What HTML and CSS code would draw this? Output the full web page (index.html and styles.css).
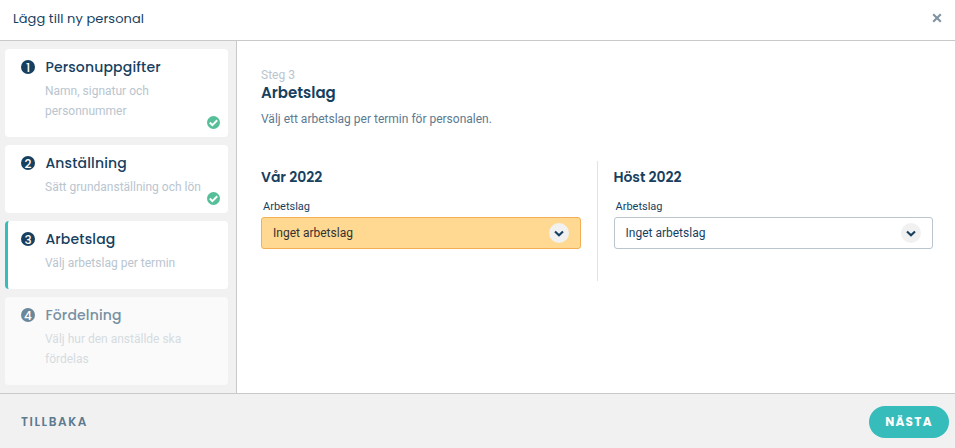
FILE: index.html
```html
<!DOCTYPE html>
<html lang="sv">
<head>
<meta charset="utf-8">
<title>Lägg till ny personal</title>
<link rel="stylesheet" href="styles.css">
</head>
<body>
<div class="dialog">
  <header class="header">
    <h1 class="header-title">Lägg till ny personal</h1>
    <button class="close" aria-label="Stäng"><svg width="10" height="10" viewBox="0 0 10 10"><path d="M1.2 1.2l7.6 7.6M8.8 1.2l-7.6 7.6"/></svg></button>
  </header>
  <div class="body">
    <nav class="steps">
      <div class="step tall">
        <span class="num">1</span>
        <div><h2 class="step-title">Personuppgifter</h2><p class="step-text">Namn, signatur och<br>personnummer</p></div>
        <svg class="check" width="13" height="13" viewBox="0 0 13 13"><circle cx="6.5" cy="6.5" r="6.5"/><path d="M2.8 6.5l2.6 2.6 4.8-4.8"/></svg>
      </div>
      <div class="step">
        <span class="num">2</span>
        <div><h2 class="step-title">Anställning</h2><p class="step-text">Sätt grundanställning och lön</p></div>
        <svg class="check" width="13" height="13" viewBox="0 0 13 13"><circle cx="6.5" cy="6.5" r="6.5"/><path d="M2.8 6.5l2.6 2.6 4.8-4.8"/></svg>
      </div>
      <div class="step active">
        <span class="num">3</span>
        <div><h2 class="step-title">Arbetslag</h2><p class="step-text">Välj arbetslag per termin</p></div>
      </div>
      <div class="step tall upcoming">
        <span class="num">4</span>
        <div><h2 class="step-title">Fördelning</h2><p class="step-text">Välj hur den anställde ska<br>fördelas</p></div>
      </div>
    </nav>
    <main class="content">
      <p class="eyebrow">Steg 3</p>
      <h2 class="title">Arbetslag</h2>
      <p class="intro">Välj ett arbetslag per termin för personalen.</p>
      <div class="terms">
        <section class="term">
          <h3 class="term-title">Vår 2022</h3>
          <span class="label">Arbetslag</span>
          <div class="select highlighted"><span>Inget arbetslag</span><span class="arrow"><svg width="10" height="7" viewBox="0 0 10 7"><path d="M1 1.5l4 3.8 4-3.8"/></svg></span></div>
        </section>
        <section class="term">
          <h3 class="term-title">Höst 2022</h3>
          <span class="label">Arbetslag</span>
          <div class="select"><span>Inget arbetslag</span><span class="arrow"><svg width="10" height="7" viewBox="0 0 10 7"><path d="M1 1.5l4 3.8 4-3.8"/></svg></span></div>
        </section>
      </div>
    </main>
  </div>
  <footer class="footer">
    <button class="back">TILLBAKA</button>
    <button class="next">NÄSTA</button>
  </footer>
</div>
</body>
</html>
```
FILE: styles.css
```css
* { box-sizing: border-box; margin: 0; padding: 0; }
body { font-family: Roboto, "Liberation Sans", sans-serif; font-size: 12px; color: #173f5f; background: #fff; }
button { border: 0; background: none; }
h1, h2, h3, .num, .back, .next { font-family: Poppins, Inter, sans-serif; }
.dialog { height: 448px; display: flex; flex-direction: column; overflow: hidden; }
.header { height: 41px; border-bottom: 1px solid #c9c9c9; display: flex; align-items: center; justify-content: space-between; padding: 0 13px; }
.header-title { font-size: 13px; line-height: 20px; font-weight: 400; margin-top: -3px; letter-spacing: 0.08px; }
.close { width: 10px; height: 10px; margin-top: -4px; }
.close svg { display: block; fill: none; stroke: #7f93a2; stroke-width: 2.1; }
.body { flex: 1; display: flex; min-height: 0; }
.steps { width: 237px; padding: 8px 8px 8px 5px; background: #f1f1f1; border-right: 1px solid #c9c9c9; display: flex; flex-direction: column; gap: 8px; }
.step { position: relative; height: 68px; background: #fff; border-radius: 4px; padding: 8px 0 0 16px; display: flex; }
.step.tall { height: 88px; }
.active { border-left: 3px solid #36bcba; padding-left: 13px; }
.upcoming { background: #fafafa; }
.num { width: 14px; height: 14px; margin: 3px 10px 0 0; border-radius: 50%; background: #173f5f; color: #fff; font-size: 12px; font-weight: 500; line-height: 15px; text-align: center; }
.step-title { font-size: 14px; line-height: 20px; font-weight: 500; letter-spacing: 0.16px; color: #173f5f; padding-left: 0.4px; }
.step-text { line-height: 20px; margin-top: 4px; color: #b9c5cf; white-space: nowrap; }
.upcoming .num { background: #6b889b; }
.upcoming .step-title { color: #7890a2; }
.upcoming .step-text { color: #d5dce1; }
.check { position: absolute; right: 8px; bottom: 8px; }
.check circle { fill: #54bf98; }
.check path { fill: none; stroke: #fff; stroke-width: 2; }
.content { flex: 1; padding: 24px 22px 0 24px; }
.eyebrow { line-height: 20px; color: #b9c5cf; }
.title { font-size: 15px; line-height: 20px; font-weight: 600; margin-top: -2px; }
.intro { line-height: 20px; margin-top: 6px; color: #5c7a90; }
.terms { display: grid; grid-template-columns: 336.5px 335.5px; height: 120px; margin-top: 32px; }
.term { padding: 6px 0 0 16px; }
.term:first-child { padding: 6px 15.5px 0 0; border-right: 1px solid #e3e3e3; }
.term-title { font-size: 14px; line-height: 20px; font-weight: 600; letter-spacing: -0.05px; }
.label { display: block; font-size: 11px; line-height: 16px; margin: 12px 0 2px 2px; }
.select { height: 32px; border: 1px solid #b9c5cf; border-radius: 3px; padding: 0 11px; display: flex; align-items: center; justify-content: space-between; }
.highlighted { background: #ffd991; border-color: #f2af55; color: #333; }
.arrow { width: 20px; height: 20px; border-radius: 50%; background: #f1f1f1; display: flex; align-items: center; justify-content: center; }
.arrow svg { fill: none; stroke: #173f5f; stroke-width: 2.1; }
.footer { height: 55px; background: #f1f1f1; border-top: 1px solid #c9c9c9; display: flex; align-items: center; justify-content: space-between; padding: 1px 6px 0 21px; }
.back { font-size: 12px; font-weight: 600; letter-spacing: 1.6px; color: #5c7a90; }
.next { width: 80px; height: 32px; border-radius: 16px; background: #36bcba; color: #fff; font-size: 12px; font-weight: 700; letter-spacing: 1.3px; }
```
